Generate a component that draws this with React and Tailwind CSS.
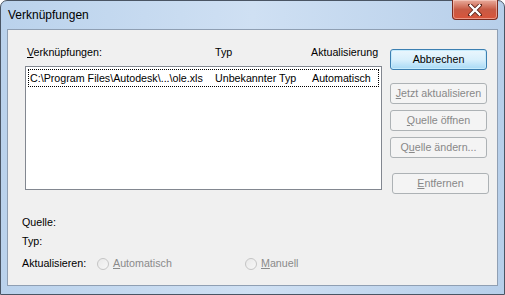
import React from 'react'

const FONT = { fontFamily: '"Liberation Sans", Arial, sans-serif' }

function Btn({ children, className = '', primary = false }) {
  return (
    <div
      className={`flex h-[21px] w-[97px] items-center justify-center rounded-[3px] border text-[10.7px] leading-none ${
        primary
          ? 'border-[#3c7fb1] bg-gradient-to-b from-[#eaf6fd] via-[#d9f0fc] to-[#a7d9f5] text-black shadow-[inset_0_0_0_1px_#c6ebfc]'
          : 'border-[#adb2b5] bg-[#f4f4f4] text-[#888888]'
      } ${className}`}
    >
      {children}
    </div>
  )
}

function Radio({ label, u, className = '' }) {
  return (
    <div className={`flex items-center ${className}`}>
      <span className="h-[12px] w-[12px] shrink-0 rounded-full border border-[#c5c5c5] bg-gradient-to-br from-[#e9e9e9] to-[#f7f7f7]" />
      <span className="ml-[4px] text-[#8a8a8a]">
        <span className="underline">{u}</span>
        {label}
      </span>
    </div>
  )
}

export default function App() {
  return (
    <div
      style={FONT}
      className="relative flex h-[295px] w-[505px] flex-col rounded-t-[7px] border border-[#4a5564] bg-gradient-to-r from-[#bad2ec] via-[#cfe0f3] to-[#b7cfea] px-[6px] pb-[8px]"
    >
      {/* title bar */}
      <div className="flex h-[28px] shrink-0 items-center pl-[1px] text-[12px] text-black">Verknüpfungen</div>
      <div className="absolute right-[6px] top-[-1px] flex h-[20px] w-[46px] items-center justify-center rounded-b-[4px] border border-t-0 border-[#7a2b1f] bg-gradient-to-b from-[#e8ab9c] via-[#c75a44] to-[#d9543a] shadow-[inset_0_0_0_1px_rgba(255,220,210,0.5)]">
        <svg width="14" height="12" viewBox="0 0 14 12">
          <path d="M2 1 L12 11 M12 1 L2 11" stroke="#5a2218" strokeWidth="4" strokeLinecap="square" />
          <path d="M2.5 1.5 L11.5 10.5 M11.5 1.5 L2.5 10.5" stroke="#ffffff" strokeWidth="2.4" strokeLinecap="square" />
        </svg>
      </div>

      {/* client area */}
      <div className="flex-1 border border-[#8f9fb3] bg-[#f0f0f0] text-[10.7px] leading-[13px] text-black">
        <div className="flex h-[165px] pl-[17px]">
          <div className="flex w-[357px] flex-col pt-[16px]">
            <div className="relative h-[13px]">
              <span className="absolute left-[2px]">
                <span className="underline">V</span>erknüpfungen:
              </span>
              <span className="absolute left-[190px]">Typ</span>
              <span className="absolute left-[286px]">Aktualisierung</span>
            </div>
            <div className="mt-[7px] h-[124px] border border-[#828790] bg-white p-[2px]">
              <div className="relative h-[18px] border border-dotted border-black">
                <span className="absolute left-[1px] top-[2px]">C:\Program Files\Autodesk\...\ole.xls</span>
                <span className="absolute left-[186px] top-[2px]">Unbekannter Typ</span>
                <span className="absolute left-[283px] top-[2px]">Automatisch</span>
              </div>
            </div>
          </div>
          <div className="ml-[8px] flex flex-col pt-[19px]">
            <Btn primary>Abbrechen</Btn>
            <Btn className="mt-[13px]">
              <span className="underline">J</span>etzt aktualisieren
            </Btn>
            <Btn className="mt-[6px]">
              <span className="underline">Q</span>uelle öffnen
            </Btn>
            <Btn className="mt-[6px]">
              Q<span className="underline">u</span>elle ändern...
            </Btn>
            <Btn className="ml-[2px] mt-[15px]">
              <span className="underline">E</span>ntfernen
            </Btn>
          </div>
        </div>

        <div className="mt-[21px] flex flex-col pl-[14px]">
          <div className="h-[13px]">Quelle:</div>
          <div className="mt-[6px] h-[13px]">Typ:</div>
          <div className="mt-[9px] flex h-[13px] items-center">
            <span className="w-[75px] shrink-0">Aktualisieren:</span>
            <Radio u="A" label="utomatisch" className="w-[148px]" />
            <Radio u="M" label="anuell" />
          </div>
        </div>
      </div>
    </div>
  )
}
